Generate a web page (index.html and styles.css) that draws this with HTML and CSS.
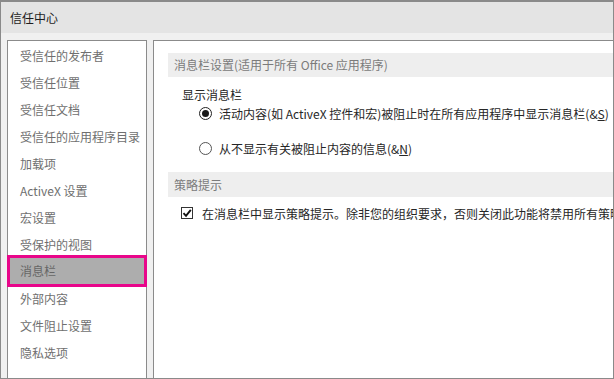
FILE: index.html
```html
<!DOCTYPE html>
<html lang="zh-CN">
<head>
    <meta charset="UTF-8">
    <title>信任中心</title>
    <link rel="stylesheet" href="styles.css">
</head>
<body>
<div class="window">
    <div class="titlebar">信任中心</div>
    <div class="main">
        <ul class="nav">
            <li>受信任的发布者</li>
            <li>受信任位置</li>
            <li>受信任文档</li>
            <li>受信任的应用程序目录</li>
            <li>加载项</li>
            <li>ActiveX 设置</li>
            <li>宏设置</li>
            <li>受保护的视图</li>
            <li class="selected">消息栏</li>
            <li>外部内容</li>
            <li>文件阻止设置</li>
            <li>隐私选项</li>
        </ul>
        <div class="content">
            <div class="section-head">消息栏设置(适用于所有 Office 应用程序)</div>
            <div class="group-label">显示消息栏</div>
            <div class="option radio-row first">
                <span class="radio checked"></span>
                <span>活动内容(如 ActiveX 控件和宏)被阻止时在所有应用程序中显示消息栏(&amp;<u>S</u>)</span>
            </div>
            <div class="option radio-row second">
                <span class="radio"></span>
                <span>从不显示有关被阻止内容的信息(&amp;<u>N</u>)</span>
            </div>
            <div class="section-head policy">策略提示</div>
            <div class="option check-row">
                <span class="checkbox">
                    <svg width="10" height="10" viewBox="0 0 10 10"><path d="M1.5 5.2 L4 7.8 L8.8 1.8" fill="none" stroke="#111" stroke-width="1.9"/></svg>
                </span>
                <span>在消息栏中显示策略提示。除非您的组织要求，否则关闭此功能将禁用所有策略提示。</span>
            </div>
        </div>
    </div>
</div>
</body>
</html>
```

FILE: styles.css
```css
*{
    margin: 0;
    padding: 0;
    box-sizing: border-box;
}
body{
    font-family: "Noto Sans CJK SC", "Noto Sans", sans-serif;
    font-size: 12px;
    background-color: #fff;
}
.window{
    width: 614px;
    height: 379px;
    border: 1px solid #8a8a8a;
    border-top-width: 2px;
    display: flex;
    flex-direction: column;
    overflow: hidden;
}
.titlebar{
    height: 31px;
    line-height: 31px;
    padding-left: 9px;
    background-color: #e4e4e4;
    color: #1e1e1e;
}
.main{
    flex: 1;
    display: flex;
    gap: 6px;
    padding: 7px 0 0 6px;
    background-color: #f0f0f0;
    min-height: 0;
}
.nav{
    list-style: none;
    width: 140px;
    flex: none;
    background-color: #fff;
    border: 1px solid #8b8b8b;
    border-bottom: none;
    padding-top: 1px;
}
.nav li{
    height: 27px;
    line-height: 27px;
    padding-left: 12px;
    color: #6f6f6f;
    white-space: nowrap;
}
.nav li.selected{
    height: 32px;
    line-height: 26px;
    margin: -3px -1px -2px;
    padding-left: 10px;
    border: 3px solid #e8068a;
    background-color: #adadad;
    color: #666;
}
.content{
    flex: 1;
    min-width: 0;
    background-color: #fff;
    border: 1px solid #8b8b8b;
    border-right: none;
    border-bottom: none;
    overflow: hidden;
    white-space: nowrap;
}
.section-head{
    margin: 12px 0 0 14px;
    height: 24px;
    line-height: 24px;
    padding-left: 6px;
    background-color: #eeeeee;
    color: #7b7b7b;
}
.section-head.policy{
    margin-top: 15px;
    height: 25px;
    line-height: 25px;
}
.group-label{
    margin: 9px 0 0 28px;
    line-height: 18px;
    color: #262626;
}
.option{
    display: flex;
    align-items: center;
    height: 18px;
    color: #262626;
}
.radio-row{
    padding-left: 45px;
    gap: 7px;
}
.radio-row.second{
    margin-top: 17px;
}
.radio{
    width: 13px;
    height: 13px;
    flex: none;
    border: 1px solid #555;
    border-radius: 50%;
    display: flex;
    align-items: center;
    justify-content: center;
}
.radio.checked{
    border-color: #222;
}
.radio.checked::after{
    content: "";
    width: 7px;
    height: 7px;
    border-radius: 50%;
    background-color: #1a1a1a;
}
.check-row{
    margin-top: 7px;
    padding-left: 27px;
    gap: 9px;
}
.checkbox{
    width: 12px;
    height: 12px;
    flex: none;
    border: 1px solid #333;
    display: flex;
    align-items: center;
    justify-content: center;
}
```
